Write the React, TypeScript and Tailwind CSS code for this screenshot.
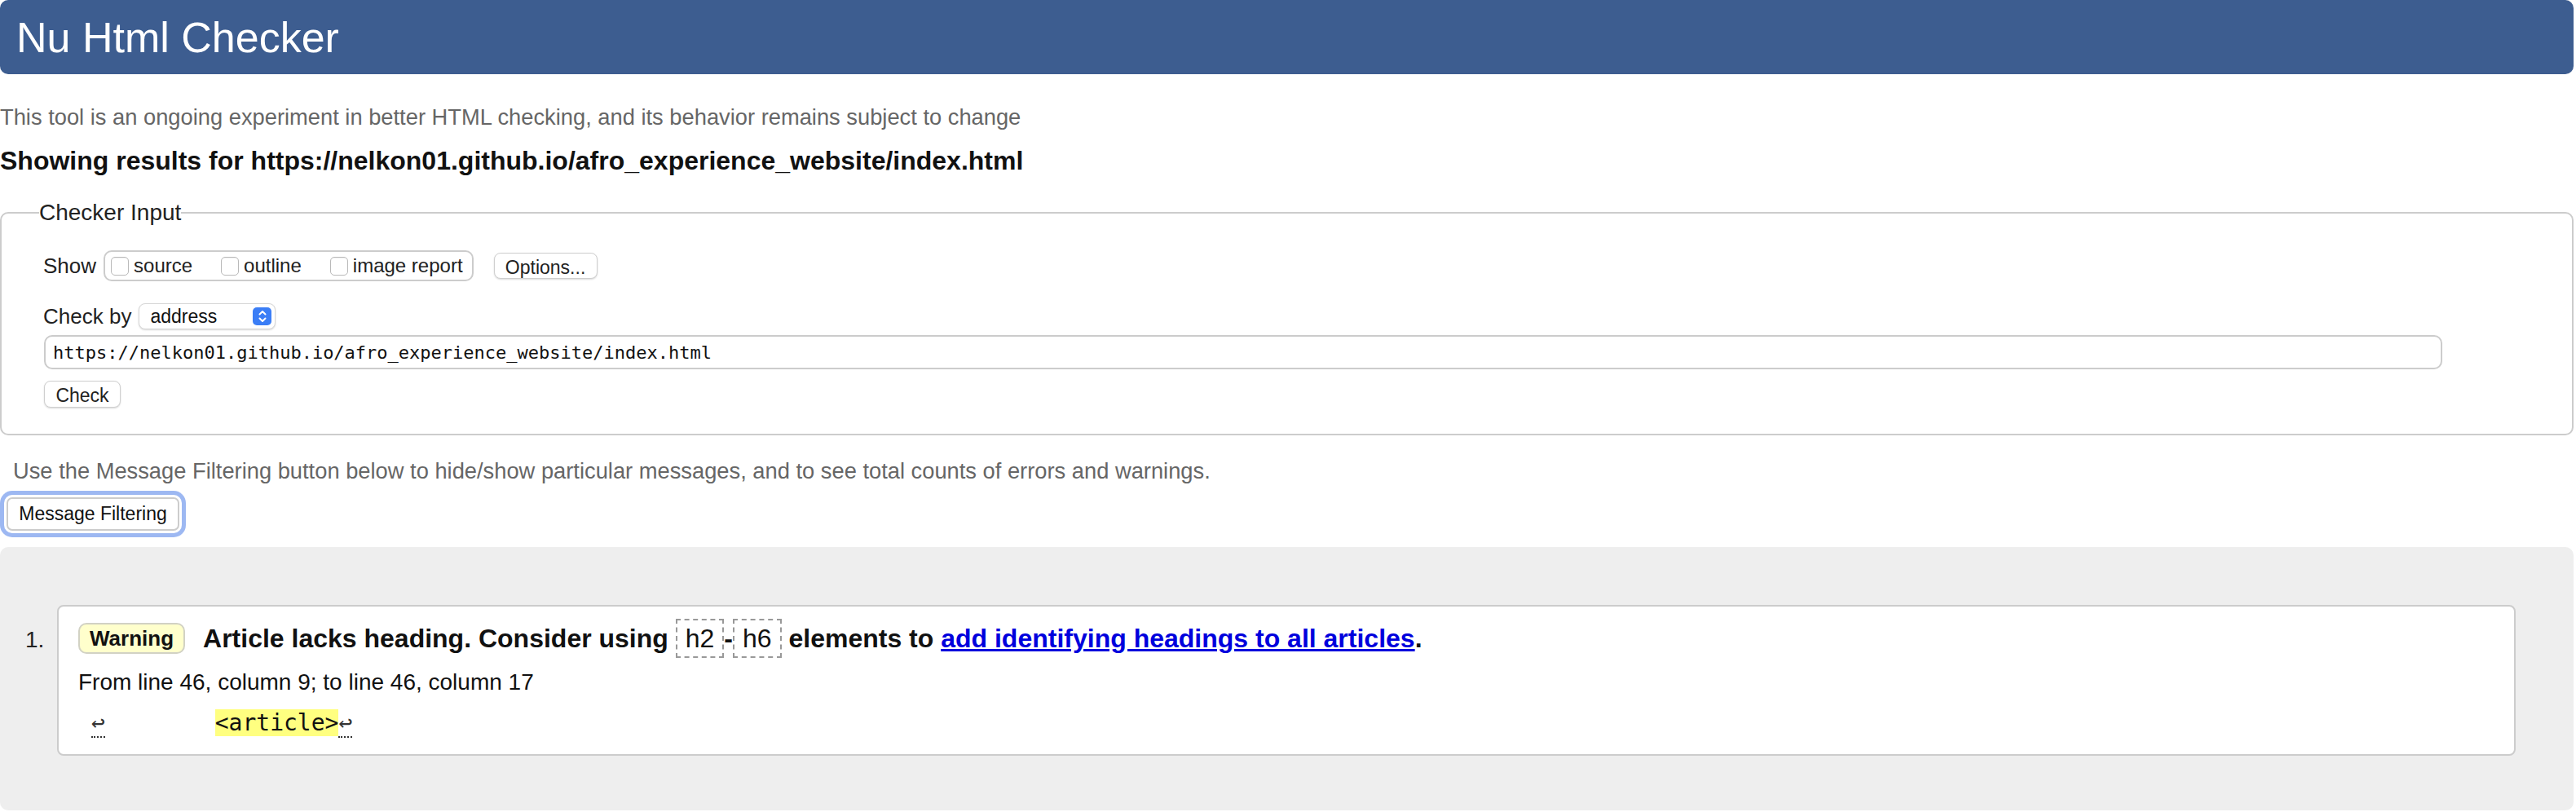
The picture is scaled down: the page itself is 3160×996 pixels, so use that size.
import React from "react";

const sans = "font-['Liberation_Sans',Arial,Helvetica,sans-serif]";
const mono = "font-['DejaVu_Sans_Mono','Liberation_Mono',monospace]";

const Checkbox: React.FC<{ label: string; last?: boolean }> = ({ label, last }) => (
  <label className={`flex items-center gap-[6px] ${last ? "" : "mr-[35px]"}`}>
    <span className="w-[22px] h-[23px] rounded-[5px] border border-[#b9b9b9] bg-white shadow-[inset_0_1px_1px_rgba(0,0,0,0.06)]" />
    <span className="text-[24px] leading-[28px] text-[#222]">{label}</span>
  </label>
);

const SelectArrows = () => (
  <span className="w-[23px] h-[22px] rounded-[5px] bg-[#3b7ef6] flex items-center justify-center">
    <svg width="12" height="18" viewBox="0 0 12 18" fill="none" stroke="white" strokeWidth="2" strokeLinecap="round" strokeLinejoin="round">
      <path d="M2.5 6.5 L6 3 L9.5 6.5" />
      <path d="M2.5 11.5 L6 15 L9.5 11.5" />
    </svg>
  </span>
);

const Return = () => (
  <span className="text-[#333] border-b-2 border-dotted border-[#333]">↩</span>
);

const codeBox = `inline-block ${sans} font-normal px-[10px] py-[4px] leading-[36px] border-2 border-dashed border-[#999]`;

export default function App() {
  return (
    <div className={`w-[3157px] min-h-[996px] bg-white text-[#222] ${sans}`}>
      <header className="h-[91px] rounded-[10px] bg-[#3d5d90] flex items-center pl-[20px]">
        <h1 className="text-[52px] leading-[60px] text-white font-normal">Nu Html Checker</h1>
      </header>

      <p className="mt-[37px] text-[27.3px] leading-[32px] text-[#666]">
        This tool is an ongoing experiment in better HTML checking, and its behavior remains subject to change
      </p>
      <p className="mt-[19px] text-[32px] leading-[36px] font-bold text-[#111]">
        Showing results for https://nelkon01.github.io/afro_experience_website/index.html
      </p>

      <fieldset className="mt-[30px] border-2 border-[#cccccc] rounded-[10px] pl-[46px] pt-[30px] pb-[32px]">
        <legend className="text-[28px] leading-[32px] text-[#222]">Checker Input</legend>

        <div className="ml-[5px] flex items-center h-[38px]">
          <span className="text-[26px] text-[#222] mr-[9px]">Show</span>
          <div className="h-[38px] flex items-center border-2 border-[#cccccc] rounded-[10px] pl-[7px] pr-[11px]">
            <Checkbox label="source" />
            <Checkbox label="outline" />
            <Checkbox label="image report" last />
          </div>
          <button className="ml-[25px] h-[32px] w-[127px] rounded-[8px] border border-[#cfcfcf] bg-white shadow-[0_1px_2px_rgba(0,0,0,0.15)] text-[23px] text-[#222]">
            Options...
          </button>
        </div>

        <div className="ml-[5px] mt-[27px] flex items-center h-[32px]">
          <span className="text-[26px] text-[#222] mr-[9px]">Check by</span>
          <div className="h-[32px] w-[168px] rounded-[8px] border border-[#d6d6d6] bg-white shadow-[0_1px_2px_rgba(0,0,0,0.15)] flex items-center justify-between pl-[13px] pr-[4px]">
            <span className="text-[23px] text-[#111]">address</span>
            <SelectArrows />
          </div>
        </div>

        <div className={`ml-[6px] mt-[7px] h-[42px] w-[2942px] rounded-[10px] border-2 border-[#cccccc] flex items-center pl-[9px] text-[22px] text-[#111] ${mono}`}>
          https://nelkon01.github.io/afro_experience_website/index.html
        </div>

        <button className="ml-[6px] mt-[14px] h-[33px] w-[94px] rounded-[8px] border border-[#cfcfcf] bg-white shadow-[0_1px_2px_rgba(0,0,0,0.15)] text-[23px] text-[#222] block">
          Check
        </button>
      </fieldset>

      <p className="mt-[28px] pl-[16px] text-[27.3px] leading-[32px] text-[#666]">
        Use the Message Filtering button below to hide/show particular messages, and to see total counts of errors and warnings.
      </p>
      <button className="ml-[8px] mt-[16px] h-[41px] w-[212px] rounded-[7px] border-2 border-[#cccccc] bg-white text-[23px] text-[#111] shadow-[0_0_0_3px_#ffffff,0_0_0_8px_#9db8f2]">
        Message Filtering
      </button>

      <section className="mt-[20px] h-[323px] rounded-[10px] bg-[#eeeeee] pt-[71px] pl-[31px] pr-[71px]">
        <ol className="flex">
          <li className="flex w-full">
            <span className="w-[39px] mt-[27px] text-[28px] leading-[32px] text-[#222]">1.</span>
            <div className="flex-1 h-[185px] rounded-[8px] border-2 border-[#cccccc] bg-white pl-[24px] pt-[15px]">
              <div className="flex items-center h-[48px]">
                <span className="h-[38px] flex items-center rounded-[10px] border-2 border-[#d2d2c4] bg-[#ffffcc] px-[12px] text-[26px] font-bold text-[#111]">
                  Warning
                </span>
                <p className="ml-[22px] text-[32px] leading-[48px] font-bold text-[#111] whitespace-nowrap">
                  Article lacks heading. Consider using{" "}
                  <code className={codeBox}>h2</code>
                  -
                  <code className={codeBox}>h6</code>{" "}
                  elements to{" "}
                  <a href="#" className="text-[#0000dd] underline">add identifying headings to all articles</a>.
                </p>
              </div>
              <p className="mt-[14px] text-[28px] leading-[32px] text-[#111]">
                From line 46, column 9; to line 46, column 17
              </p>
              <p className={`mt-[16px] pl-[16px] text-[28px] leading-[36px] whitespace-pre text-[#222] ${mono}`}>
                <Return />{"        "}<span className="bg-[#ffff80] text-[#111]">&lt;article&gt;</span><Return />
              </p>
            </div>
          </li>
        </ol>
      </section>
    </div>
  );
}
